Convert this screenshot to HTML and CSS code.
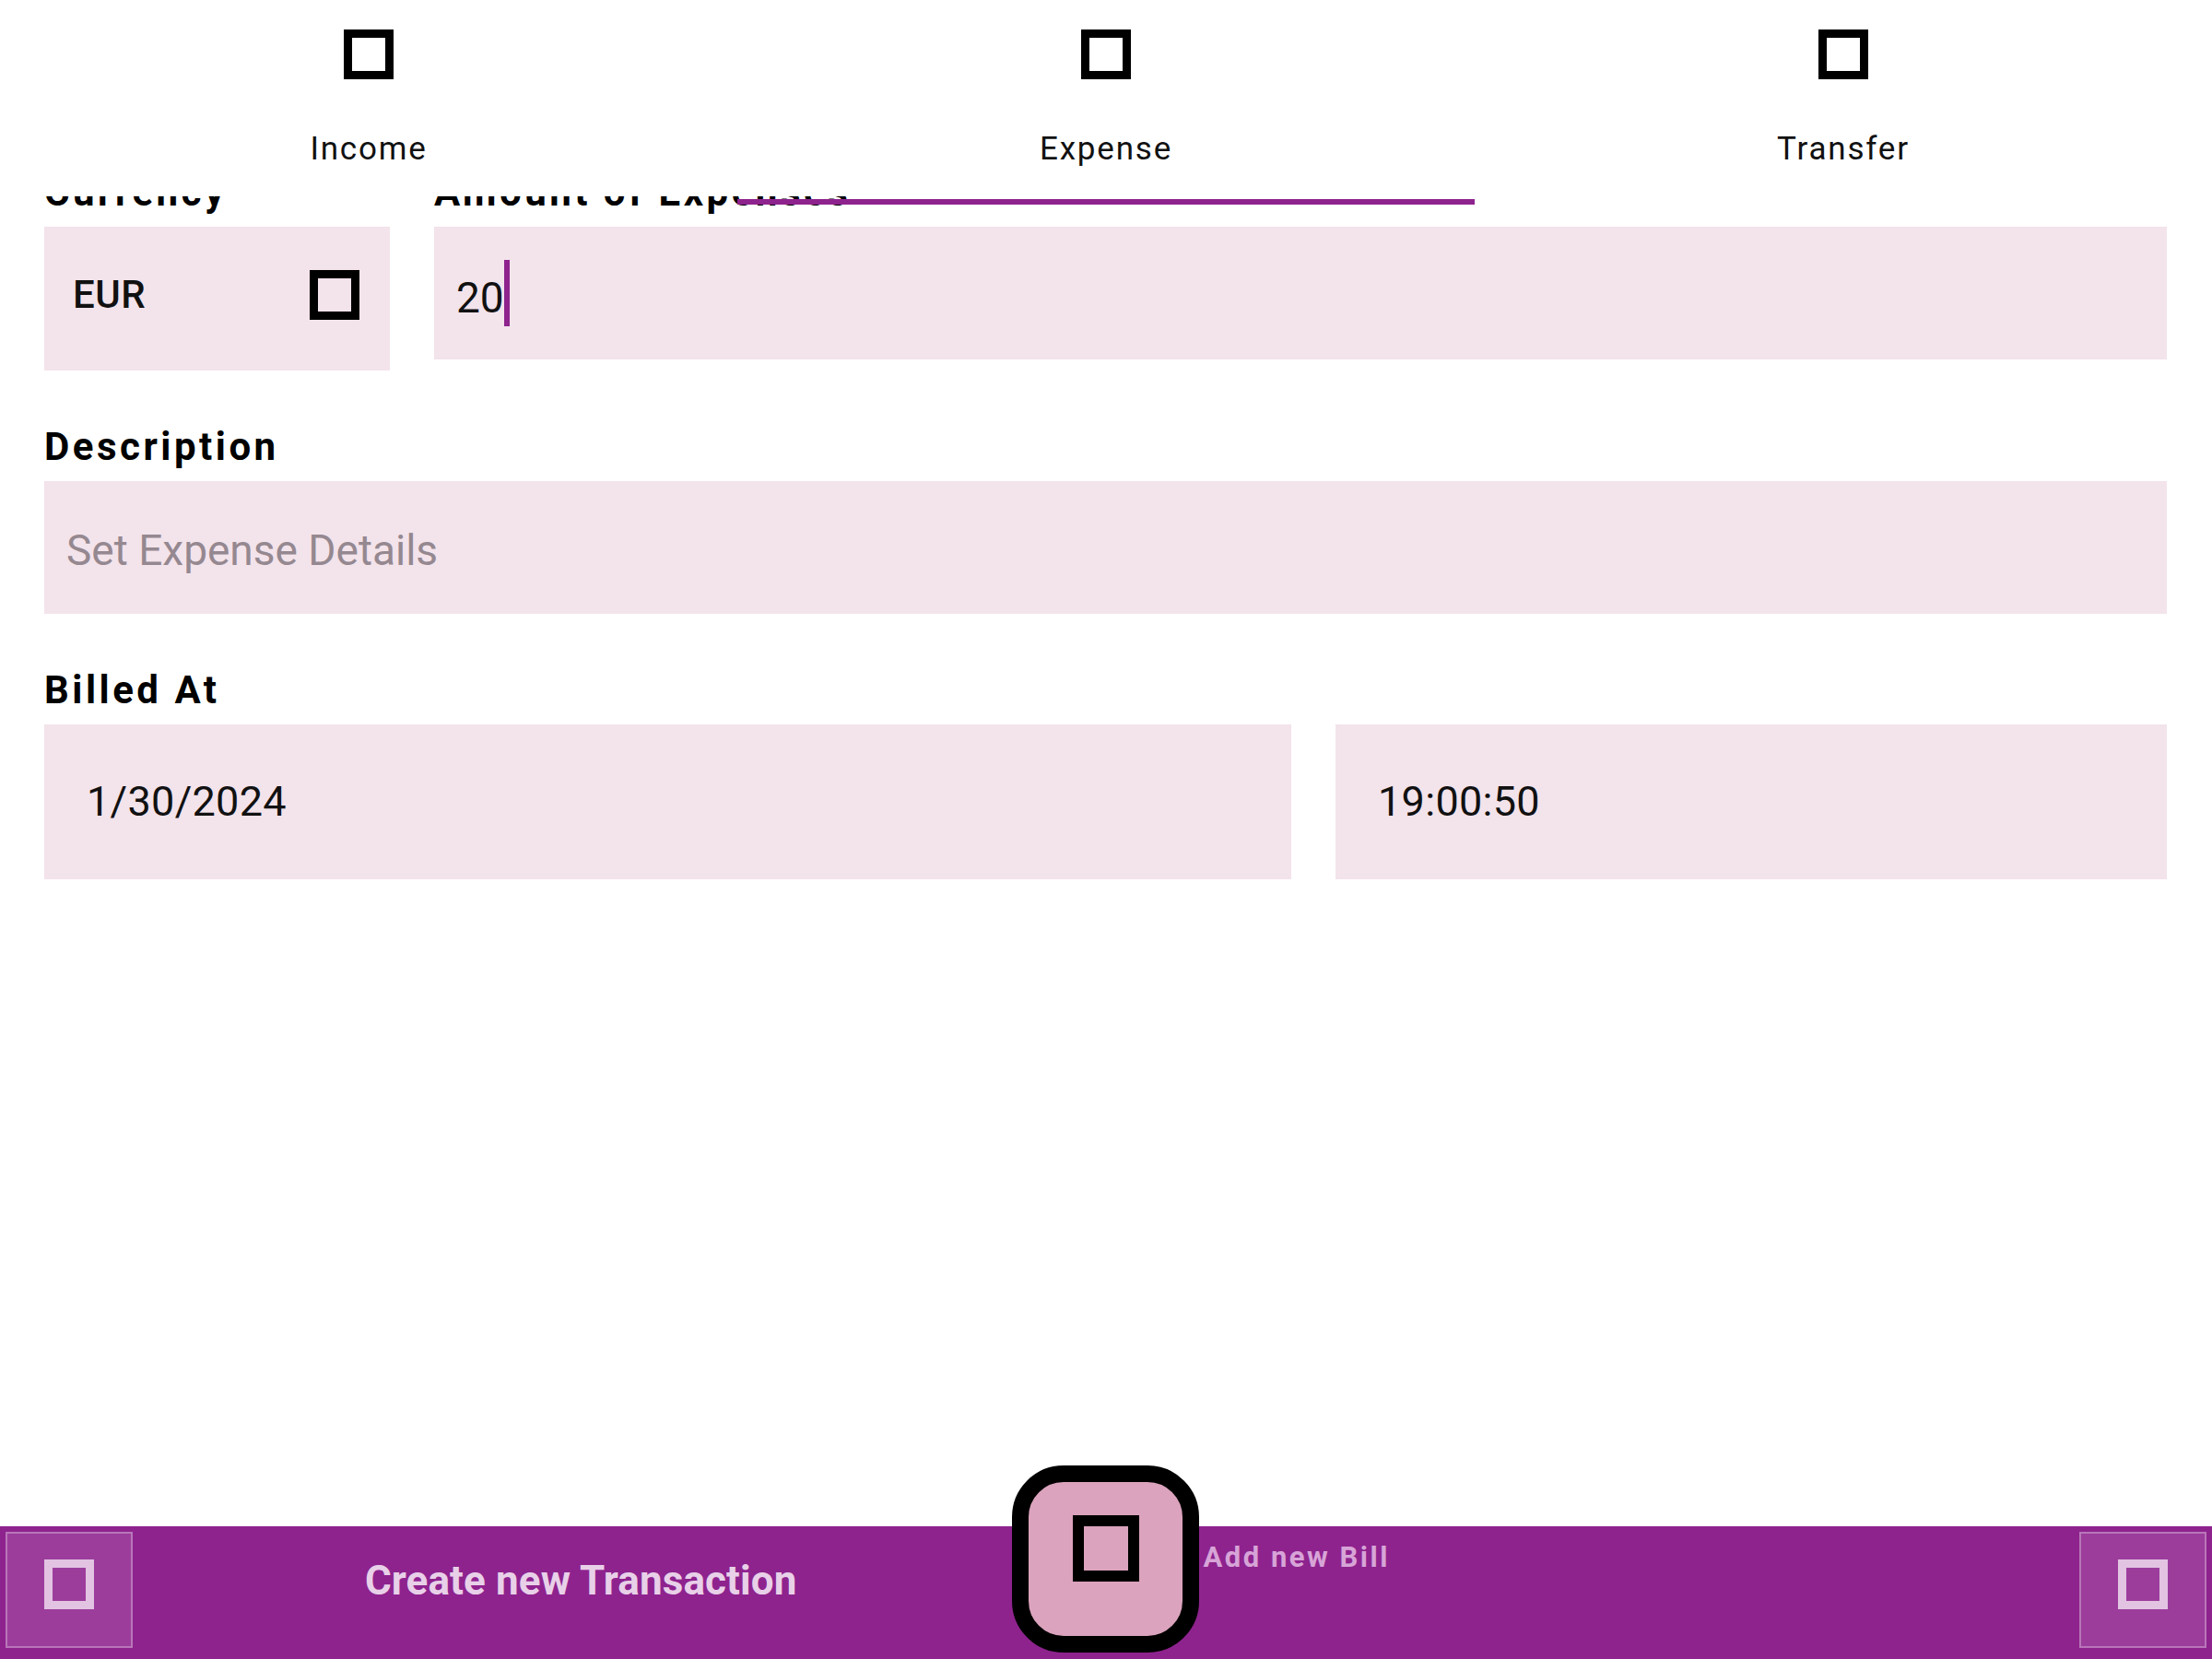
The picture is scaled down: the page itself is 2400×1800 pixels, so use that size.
FILE: index.html
```html
<!DOCTYPE html>
<html lang="en">
<head>
<meta charset="utf-8">
<title>Create new Transaction</title>
<link rel="stylesheet" href="styles.css">
</head>
<body>
<div class="app">
  <header class="tabs">
    <div class="tab">
      <span class="sq sq-tab"></span>
      <span class="tab-label">Income</span>
    </div>
    <div class="tab tab-active">
      <span class="sq sq-tab"></span>
      <span class="tab-label">Expense</span>
    </div>
    <div class="tab">
      <span class="sq sq-tab"></span>
      <span class="tab-label">Transfer</span>
    </div>
    <div class="tab-indicator"></div>
  </header>

  <main class="content">
    <form class="form">
      <div class="row row-top">
        <div class="col col-currency">
          <label class="label">Currency</label>
          <div class="field field-currency">
            <span class="value value-medium">EUR</span>
            <span class="sq sq-field"></span>
          </div>
        </div>
        <div class="col col-amount">
          <label class="label">Amount of Expenses</label>
          <div class="field field-amount">
            <span class="value value-amount">20</span><span class="caret"></span>
          </div>
        </div>
      </div>

      <div class="section">
        <label class="label">Description</label>
        <div class="field field-desc">
          <span class="placeholder">Set Expense Details</span>
        </div>
      </div>

      <div class="section">
        <label class="label">Billed At</label>
        <div class="row-dates">
          <div class="field field-dt"><span class="value">1/30/2024</span></div>
          <div class="field field-dt"><span class="value">19:00:50</span></div>
        </div>
      </div>
    </form>
  </main>

  <nav class="bottom-bar">
    <div class="nav-btn"><span class="sq sq-nav"></span></div>
    <div class="nav-area nav-area-left">
      <span class="nav-title">Create new Transaction</span>
    </div>
    <div class="fab-slot"></div>
    <div class="nav-area nav-area-right">
      <span class="nav-sub">Add new Bill</span>
    </div>
    <div class="nav-btn"><span class="sq sq-nav"></span></div>
  </nav>

  <button class="fab" type="button"><span class="sq sq-fab"></span></button>
</div>
</body>
</html>
```

FILE: styles.css
```css
* {
  box-sizing: border-box;
}

html, body {
  margin: 0;
  padding: 0;
  background: #ffffff;
}

body {
  font-family: Roboto, "Liberation Sans", sans-serif;
  color: #111111;
}

.app {
  position: relative;
  width: 2400px;
  height: 1800px;
  overflow: hidden;
  display: flex;
  flex-direction: column;
  background: #ffffff;
}

/* ---------- square placeholder icons ---------- */
.sq {
  display: block;
  flex: none;
  border-style: solid;
  border-color: #000000;
}

.sq-tab {
  width: 54px;
  height: 54px;
  border-width: 9px;
}

.sq-field {
  width: 54px;
  height: 54px;
  border-width: 9px;
}

.sq-nav {
  width: 54px;
  height: 54px;
  border-width: 9px;
  border-color: #e2c3e2;
}

.sq-fab {
  width: 72px;
  height: 72px;
  border-width: 12px;
}

/* ---------- tabs ---------- */
.tabs {
  position: relative;
  flex: none;
  height: 213px;
  display: flex;
  background: #ffffff;
}

.tab {
  flex: 1;
  display: flex;
  flex-direction: column;
  align-items: center;
  padding-top: 32px;
}

.tab-label {
  margin-top: 55px;
  font-size: 35px;
  line-height: 41px;
  letter-spacing: 1.8px;
  color: #111111;
}

.tab-indicator {
  position: absolute;
  z-index: 2;
  top: 216px;
  left: 800px;
  width: 800px;
  height: 6px;
  background: #8e238e;
}

/* ---------- form ---------- */
.content {
  flex: 1;
  overflow: hidden;
}

.form {
  margin: -28px 0 0;
  padding: 0 49px 0 48px;
}

.row {
  display: flex;
  align-items: flex-start;
  gap: 48px;
}

.col-currency {
  flex: none;
  width: 375px;
}

.col-amount {
  flex: 1;
}

.label {
  display: block;
  height: 48px;
  margin-bottom: 13px;
  font-size: 42px;
  line-height: 48px;
  font-weight: 700;
  letter-spacing: 3.5px;
  color: #000000;
  white-space: nowrap;
}

.section {
  margin-top: 59px;
}

.field {
  background: #f3e3eb;
  display: flex;
  align-items: center;
}

.value {
  font-size: 46px;
  line-height: 54px;
  color: #111111;
  white-space: nowrap;
}

.field-currency {
  height: 156px;
  justify-content: space-between;
  padding: 0 33px 8px 31px;
}

.value-medium {
  font-size: 42px;
  font-weight: 500;
  letter-spacing: 0.5px;
}

.field-amount {
  height: 144px;
  padding-left: 24px;
}

.value-amount {
  padding-top: 10px;
}

.caret {
  display: block;
  width: 6px;
  height: 72px;
  background: #8e238e;
}

.field-desc {
  height: 144px;
  padding: 5px 0 0 24px;
}

.placeholder {
  font-size: 46px;
  line-height: 54px;
  color: #958890;
  white-space: nowrap;
}

.row-dates {
  display: grid;
  grid-template-columns: 3fr 2fr;
  gap: 48px;
}

.field-dt {
  height: 168px;
  padding-left: 46px;
}

.field-dt .value {
  font-size: 45px;
  letter-spacing: 0.3px;
}

/* ---------- bottom bar ---------- */
.bottom-bar {
  flex: none;
  height: 144px;
  display: grid;
  grid-template-columns: 138px 1fr 203px 1fr 138px;
  padding: 6px 6px 12px;
  background: #8e238e;
}

.nav-btn {
  display: flex;
  align-items: center;
  justify-content: center;
  padding-bottom: 12px;
  background: #9c3d9c;
  border: 2px solid #b976b9;
}

.nav-area {
  display: flex;
  min-width: 0;
}

.nav-area-left {
  align-items: center;
  justify-content: center;
  padding: 0 0 20px 18px;
}

.nav-title {
  font-size: 44px;
  font-weight: 700;
  letter-spacing: 0.1px;
  color: #e8d0e8;
  white-space: nowrap;
}

.nav-area-right {
  align-items: flex-start;
  padding: 10px 0 0 4px;
}

.nav-sub {
  font-size: 31px;
  line-height: 36px;
  font-weight: 700;
  letter-spacing: 2.5px;
  color: #d7a4d7;
  white-space: nowrap;
}

.fab {
  position: absolute;
  z-index: 3;
  left: 1098px;
  top: 1590px;
  width: 203px;
  height: 203px;
  margin: 0;
  padding: 36px 0 0;
  display: flex;
  flex-direction: column;
  align-items: center;
  background: #dba3bd;
  border: 18px solid #000000;
  border-radius: 56px;
  cursor: pointer;
}
```
